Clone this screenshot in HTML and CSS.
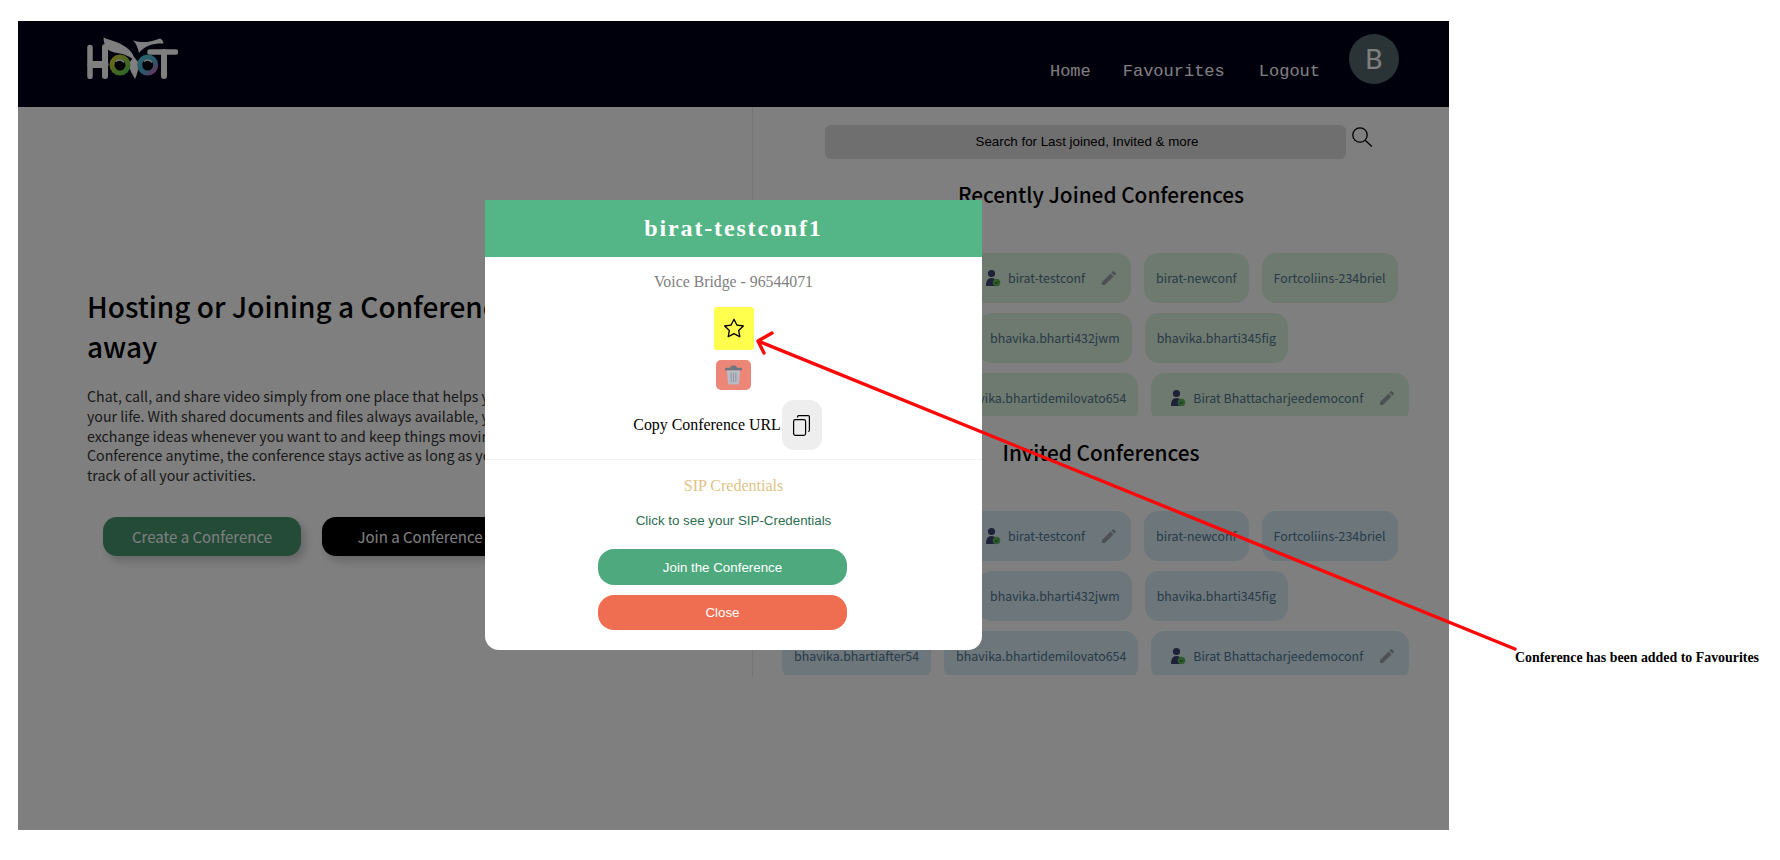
FILE: index.html
```html
<!DOCTYPE html>
<html lang="en">
<head>
<meta charset="utf-8">
<title>Hoot</title>
<link rel="stylesheet" href="styles.css">
</head>
<body>
<svg class="defs" width="0" height="0" aria-hidden="true">
  <symbol id="host" viewBox="0 0 16 18">
    <circle cx="6.5" cy="4.5" r="3.6" fill="#3c4270"/>
    <path d="M1 17c0-5 1.500-8 5.500-8s5.500 3 5.500 8z" fill="#3c4270"/>
    <circle cx="11.500" cy="13.500" r="3.800" fill="#5cb85c"/>
    <path d="M9.800 13.500l1.200 1.200 2-2" fill="none" stroke="#1c3d1c" stroke-width=".9"/>
  </symbol>
  <symbol id="edit" viewBox="3 3 18 18">
    <path d="M3 17.250V21h3.750L17.810 9.940l-3.750-3.750L3 17.250zM20.710 7.040c.39-.39.39-1.020 0-1.410l-2.340-2.340c-.39-.39-1.020-.39-1.410 0l-1.830 1.830 3.750 3.750 1.830-1.830z" fill="#9aa3a8"/>
  </symbol>
</svg>

<div class="frame">
  <header class="topbar">
    <svg class="logo" viewBox="0 0 91 42" aria-label="Hoot logo">
      <defs>
        <linearGradient id="eye1" x1="0" y1="0" x2="1" y2="1"><stop offset="0" stop-color="#e0d030"/><stop offset="1" stop-color="#50d050"/></linearGradient>
        <linearGradient id="eye2" x1="0" y1="0" x2="1" y2="1"><stop offset="0" stop-color="#50c8d8"/><stop offset=".6" stop-color="#50b0d8"/><stop offset="1" stop-color="#e060b8"/></linearGradient>
      </defs>
      <g fill="none" stroke="#fff" stroke-linecap="round">
        <path d="M3 10.500v29" stroke-width="5.500"/>
        <path d="M4 27.500h14" stroke-width="7"/>
        <path d="M18 10v29" stroke-width="6"/>
        <path d="M63 15h25.500" stroke-width="5.500"/>
        <path d="M77 15v24" stroke-width="6"/>
      </g>
      <path d="M16.500.3C20 3 30 4 37 9c7 4 10 9 11 15-4-4-10-7-18-8-6-1-13-3-13.500-15.700z" fill="#fff"/>
      <path d="M45.700 3C52 6 62 6 73 1.500c2 .5 3 2.500 3.500 5C68 6 58 8 52 16c-1-5-3-10-6.300-13z" fill="#fff"/>
      <path d="M41 27q3 9 7 15 3-6 4-16l-5-6z" fill="#fff"/>
      <circle cx="33" cy="28" r="8" fill="#00000d" stroke="url(#eye1)" stroke-width="5"/>
      <path d="M29 24.500a5 5 0 0 1 8 1" fill="none" stroke="#fff" stroke-width="1.500"/>
      <circle cx="60.700" cy="28" r="8" fill="#00000d" stroke="url(#eye2)" stroke-width="5"/>
      <path d="M57 24.500a5 5 0 0 1 8 1" fill="none" stroke="#fff" stroke-width="1.500"/>
    </svg>
    <nav class="nav">
      <a class="nav-home">Home</a>
      <a class="nav-fav">Favourites</a>
      <a class="nav-out">Logout</a>
    </nav>
    <div class="avatar">B</div>
  </header>

  <main class="content">
    <section class="intro">
      <h1 class="intro-title">Hosting or Joining a Conference is just one click<br>away</h1>
      <p class="intro-text">Chat, call, and share video simply from one place that helps you stay on top of<br>your life. With shared documents and files always available, you can easily<br>exchange ideas whenever you want to and keep things moving. Join a<br>Conference anytime, the conference stays active as long as you need and keeps<br>track of all your activities.</p>
      <div class="intro-actions">
        <button class="cta cta-create">Create a Conference</button>
        <button class="cta cta-join">Join a Conference</button>
      </div>
    </section>

    <section class="lists">
      <div class="search-row">
        <div class="search-box">Search for Last joined, Invited &amp; more</div>
        <svg class="search-icon" viewBox="0 0 20 20"><circle cx="8" cy="8" r="7.200" fill="none" stroke="#000" stroke-width="1.300"/><path d="M13.200 13.200L19.800 19.500" stroke="#000" stroke-width="1.300"/></svg>
      </div>

      <h2 class="list-title">Recently Joined Conferences</h2>
      <div class="tag-list tag-list-green">
        <div class="tag-row">
          <span class="tag w-a">bhavika.bhartiafter54</span>
          <span class="tag tag-own"><svg class="host-icon"><use href="#host"/></svg>birat-testconf<svg class="edit-icon"><use href="#edit"/></svg></span>
          <span class="tag">birat-newconf</span>
          <span class="tag">Fortcoliins-234briel</span>
        </div>
        <div class="tag-row">
          <span class="tag w-b">bhavika.bharti789xyz</span>
          <span class="tag">bhavika.bharti432jwm</span>
          <span class="tag">bhavika.bharti345fig</span>
        </div>
        <div class="tag-row">
          <span class="tag">bhavika.bhartiafter54</span>
          <span class="tag">bhavika.bhartidemilovato654</span>
          <span class="tag tag-own"><svg class="host-icon"><use href="#host"/></svg>Birat Bhattacharjeedemoconf<svg class="edit-icon"><use href="#edit"/></svg></span>
        </div>
      </div>

      <h2 class="list-title">Invited Conferences</h2>
      <div class="tag-list tag-list-blue">
        <div class="tag-row">
          <span class="tag w-a">bhavika.bhartiafter54</span>
          <span class="tag tag-own"><svg class="host-icon"><use href="#host"/></svg>birat-testconf<svg class="edit-icon"><use href="#edit"/></svg></span>
          <span class="tag">birat-newconf</span>
          <span class="tag">Fortcoliins-234briel</span>
        </div>
        <div class="tag-row">
          <span class="tag w-b">bhavika.bharti789xyz</span>
          <span class="tag">bhavika.bharti432jwm</span>
          <span class="tag">bhavika.bharti345fig</span>
        </div>
        <div class="tag-row">
          <span class="tag">bhavika.bhartiafter54</span>
          <span class="tag">bhavika.bhartidemilovato654</span>
          <span class="tag tag-own"><svg class="host-icon"><use href="#host"/></svg>Birat Bhattacharjeedemoconf<svg class="edit-icon"><use href="#edit"/></svg></span>
        </div>
      </div>
    </section>
  </main>

  <div class="backdrop"></div>

  <div class="modal">
    <div class="modal-head">birat-testconf1</div>
    <div class="modal-top">
      <p class="bridge">Voice Bridge - 96544071</p>
      <button class="fav-btn" aria-label="Favourite">
        <svg class="star" viewBox="0 0 16 16"><path d="M2.866 14.850c-.078.444.36.791.746.593l4.390-2.256 4.389 2.256c.386.198.824-.149.746-.592l-.83-4.730 3.522-3.356c.33-.314.16-.888-.282-.95l-4.898-.696L8.465.792a.513.513 0 0 0-.927 0L5.354 5.120l-4.898.696c-.441.062-.612.636-.283.95l3.523 3.356-.83 4.730zm4.905-2.767-3.686 1.894.694-3.957a.565.565 0 0 0-.163-.505L1.710 6.745l4.052-.576a.525.525 0 0 0 .393-.288L8 2.223l1.847 3.658a.525.525 0 0 0 .393.288l4.052.575-2.906 2.770a.565.565 0 0 0-.163.506l.694 3.957-3.686-1.894a.503.503 0 0 0-.461 0z"/></svg>
      </button>
      <button class="del-btn" aria-label="Delete">
        <svg class="trash" viewBox="0 0 18 20">
          <path d="M2 5h14l-1.200 14a1 1 0 0 1-1 1H4.200a1 1 0 0 1-1-1z" fill="#b8bcc6"/>
          <path d="M0 3.500C0 2.700.6 2.300 1.500 2.300H5.500C5.800.8 6.500 0 7.500 0h3c1 0 1.700.8 2 2.300h4c.9 0 1.500.4 1.500 1.200V5H0z" fill="#70747f"/>
          <path d="M6.500 7.500v10M9 7.500v10M11.500 7.500v10" stroke="#8a8e99" stroke-width=".9"/>
        </svg>
      </button>
      <div class="copy-row">
        <span class="copy-label">Copy Conference URL</span>
        <button class="copy-btn" aria-label="Copy">
          <svg class="copy-icon" viewBox="0 0 17 21" fill="none" stroke="#000" stroke-width="1.200">
            <rect x=".6" y="4.600" width="12" height="15.800" rx="1.800"/>
            <path d="M4.500 2.500V1.800A1.200 1.200 0 0 1 5.700.6h9.500a1.200 1.200 0 0 1 1.200 1.200v13.500a1.200 1.200 0 0 1-1.200 1.200"/>
          </svg>
        </button>
      </div>
    </div>
    <div class="modal-bottom">
      <p class="sip-title">SIP Credentials</p>
      <p class="sip-link">Click to see your SIP-Credentials</p>
      <button class="pill pill-join">Join the Conference</button>
      <button class="pill pill-close">Close</button>
    </div>
  </div>
</div>

<svg class="arrow" viewBox="0 0 1780 860" aria-hidden="true">
  <path d="M1515 649L758 341M772 333L758 341L764 353" fill="none" stroke="#fb0808" stroke-width="3.400" stroke-linecap="round" stroke-linejoin="round"/>
</svg>
<p class="note">Conference has been added to Favourites</p>
</body>
</html>
```

FILE: styles.css
```css
* { box-sizing: border-box; }

html, body {
  margin: 0;
  padding: 0;
  width: 1780px;
  height: 860px;
  overflow: hidden;
  background: #fff;
}

body {
  position: relative;
  padding: 21px 0 0 18px;
  font-family: "Noto Sans CJK JP", "Noto Sans", sans-serif;
}

.defs { position: absolute; }

p, h1, h2 { margin: 0; }

button {
  border: 0;
  padding: 0;
  font: inherit;
  cursor: pointer;
}

.frame {
  position: relative;
  width: 1431px;
  height: 809px;
  background: #fff;
  overflow: hidden;
}

.topbar {
  display: flex;
  align-items: flex-start;
  height: 86px;
  background: #00001a;
  padding: 13px 0 0 69px;
}

.logo { width: 91px; height: 42px; margin-top: 3px; }

.nav {
  display: flex;
  margin-left: auto;
  padding-top: 26px;
  font-family: "Liberation Mono", "DejaVu Sans Mono", monospace;
  font-size: 17px;
  line-height: 24px;
  color: #fff;
}

.nav-fav { margin-left: 32px; }
.nav-out { margin-left: 34px; }

.avatar {
  width: 50px;
  height: 50px;
  margin: 0 50px 0 29px;
  border-radius: 50%;
  background: #55686e;
  color: #fff;
  font-family: Roboto, "Liberation Sans", sans-serif;
  font-size: 28px;
  line-height: 52px;
  text-align: center;
}

.content {
  display: grid;
  grid-template-columns: 735px 696px;
  height: 570px;
}

.intro {
  border-right: 1px solid #eaeaea;
  padding: 179px 0 0 69px;
  overflow: hidden;
}

.intro-title {
  font-size: 28px;
  font-weight: 500;
  line-height: 40px;
  color: #000;
  white-space: nowrap;
}

.intro-text {
  margin-top: 21px;
  font-size: 14.200px;
  line-height: 19.800px;
  color: #333;
  white-space: nowrap;
}

.intro-actions {
  display: flex;
  gap: 21px;
  margin: 31px 0 0 16px;
}

.cta {
  height: 39px;
  border-radius: 14px;
  font-size: 15px;
  color: #fff;
  box-shadow: 4px 5px 10px rgba(0, 0, 0, .2);
}

.cta-create { width: 198px; background: #46966f; }
.cta-join { width: 196px; background: #000; }

.lists { padding-top: 18px; }

.search-row {
  display: flex;
  align-items: flex-start;
  gap: 6px;
  margin-left: 72px;
}

.search-box {
  width: 521px;
  height: 34px;
  padding-left: 3px;
  border-radius: 6px;
  background: #dedede;
  font-family: "Liberation Sans", Arial, sans-serif;
  font-size: 13.330px;
  line-height: 34px;
  text-align: center;
  color: #000;
}

.search-icon { width: 20px; height: 20px; margin-top: 2px; }

.list-title {
  margin-top: 18px;
  height: 34px;
  font-size: 20.800px;
  font-weight: 500;
  line-height: 34px;
  text-align: center;
  color: #000;
}

.tag-list {
  display: flex;
  flex-direction: column;
  gap: 10px;
  height: 163px;
  margin: 42px 0 0 29px;
  overflow: hidden;
}

.tag-list + .list-title { margin-top: 19px; }
.tag-list-blue { height: 164px; }

.tag-row { display: flex; gap: 13px; flex: none; }

.tag {
  display: flex;
  align-items: center;
  height: 50px;
  padding: 0 12px;
  border-radius: 14px;
  font-size: 12.400px;
  white-space: nowrap;
  color: #527690;
  flex: none;
}

.tag-list-green .tag { background: #ddf3de; }
.tag-list-blue .tag { background: #d8edf6; }

.tag-own { padding: 0 15px 0 19px; }
.w-a { width: 171px; }
.w-b { width: 183px; }

.host-icon { width: 16px; height: 18px; margin-right: 7px; flex: none; }
.edit-icon { width: 14px; height: 14px; margin-left: 17px; flex: none; }

.backdrop {
  position: absolute;
  inset: 0;
  background: rgba(0, 0, 0, .5);
}

.modal {
  position: absolute;
  left: 467px;
  top: 179px;
  width: 497px;
  height: 450px;
  background: #fff;
  border-radius: 0 0 14px 14px;
  font-family: "Liberation Serif", "Times New Roman", serif;
  text-align: center;
}

.modal-head {
  height: 57px;
  background: #54b586;
  color: #fff;
  font-size: 24px;
  font-weight: 700;
  letter-spacing: 1.850px;
  line-height: 57px;
}

.modal-top {
  display: flex;
  flex-direction: column;
  align-items: center;
  height: 203px;
  padding-top: 15px;
  border-bottom: 1px solid #eef3f2;
}

.bridge { font-size: 15.800px; line-height: 20px; color: #808080; }

.fav-btn {
  display: flex;
  align-items: center;
  justify-content: center;
  width: 40px;
  height: 43px;
  margin-top: 15px;
  padding-bottom: 2px;
  border-radius: 3px;
  background: #ffff4d;
}

.star { width: 20px; height: 20px; }

.del-btn {
  display: flex;
  align-items: center;
  justify-content: center;
  width: 35px;
  height: 30px;
  margin-top: 10px;
  border-radius: 5px;
  background: #ec8778;
}

.trash { width: 17px; height: 20px; }

.copy-row {
  display: flex;
  align-items: center;
  height: 50px;
  margin: 10px 12px 0 0;
}

.copy-label { font-size: 15.900px; color: #000; }

.copy-btn {
  display: flex;
  align-items: center;
  justify-content: center;
  width: 40px;
  height: 50px;
  margin-left: 1px;
  border-radius: 12px;
  background: #eee;
}

.copy-icon { width: 17px; height: 21px; }

.modal-bottom {
  display: flex;
  flex-direction: column;
  align-items: center;
  padding-top: 16px;
}

.sip-title { font-size: 16px; line-height: 20px; color: #e0c385; }

.sip-link {
  margin-top: 16px;
  font-family: "Liberation Sans", Arial, sans-serif;
  font-size: 13.330px;
  line-height: 18px;
  color: #2d6e50;
}

.pill {
  width: 249px;
  height: 36px;
  margin-right: 22px;
  border-radius: 16px;
  font-family: "Liberation Sans", Arial, sans-serif;
  font-size: 13.330px;
  color: #fff;
}

.pill-join { margin-top: 19px; background: #4eaa7e; }
.pill-close { height: 35px; margin-top: 10px; background: #ef6e52; }

.arrow {
  position: absolute;
  left: 0;
  top: 0;
  width: 1780px;
  height: 860px;
  pointer-events: none;
}

.note {
  position: absolute;
  left: 1515px;
  top: 649px;
  font-family: "Liberation Serif", "Times New Roman", serif;
  font-size: 13.900px;
  font-weight: 700;
  line-height: 18px;
  white-space: nowrap;
  color: #000;
}
```
